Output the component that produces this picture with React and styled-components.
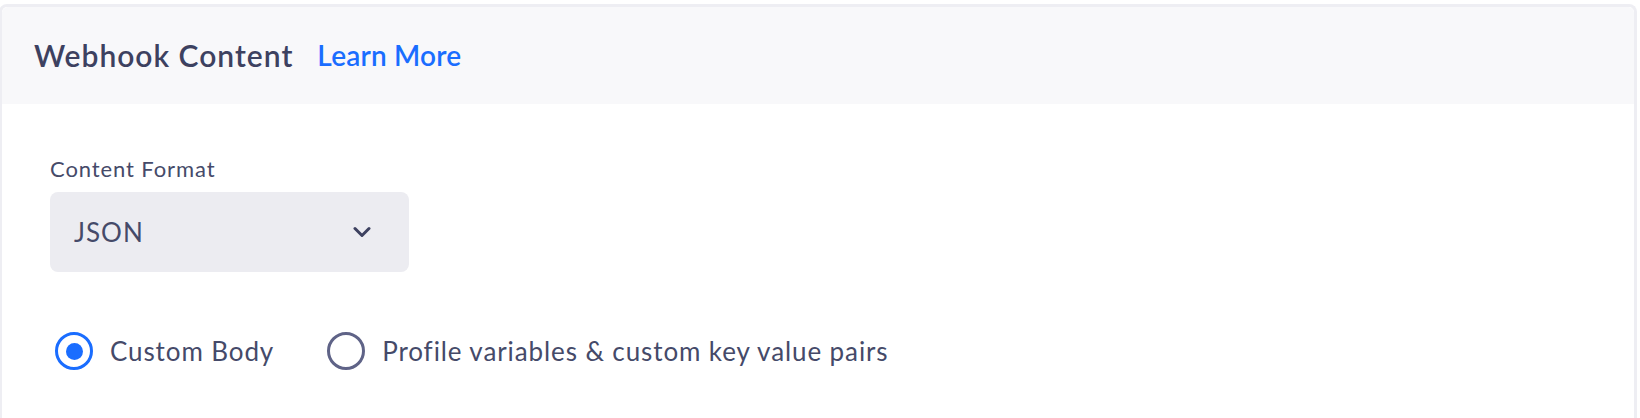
import React, { useState } from "react";
import styled, { createGlobalStyle } from "styled-components";

const GlobalStyle = createGlobalStyle`
  body {
    margin: 0;
    background: #ffffff;
    font-family: "Lato", "Liberation Sans", sans-serif;
  }
`;

const Page = styled.div`
  padding-top: 4px;
  margin-left: -1px;
  width: 1638px;
`;

const Card = styled.section`
  border: 3px solid #eeeef3;
  border-bottom: none;
  border-radius: 8px 8px 0 0;
  background: #ffffff;
  min-height: 420px;
  box-sizing: border-box;
`;

const Header = styled.header`
  display: flex;
  align-items: center;
  gap: 24px;
  height: 97px;
  padding: 0 0 2px 32px;
  box-sizing: border-box;
  background: #f8f8fa;
  border-radius: 6px 6px 0 0;
`;

const Title = styled.h2`
  margin: 0;
  font-size: 30px;
  font-weight: 600;
  color: #3d4160;
  letter-spacing: 1px;
`;

const Link = styled.a`
  font-size: 28px;
  font-weight: 600;
  color: #1a6dff;
  letter-spacing: 0.2px;
  text-decoration: none;
  cursor: pointer;
`;

const Body = styled.div`
  padding: 51px 0 0 48px;
`;

const Label = styled.label`
  display: block;
  font-size: 22px;
  line-height: 28px;
  letter-spacing: 0.9px;
  color: #454a69;
  margin-bottom: 9px;
`;

const Select = styled.button`
  display: flex;
  align-items: center;
  justify-content: space-between;
  width: 359px;
  height: 80px;
  padding: 0 38px 0 24px;
  border: none;
  border-radius: 8px;
  background: #ececf1;
  font-family: inherit;
  font-size: 26px;
  letter-spacing: 1px;
  color: #454a69;
  cursor: pointer;
`;

const RadioGroup = styled.div`
  display: flex;
  align-items: center;
  gap: 53px;
  margin-top: 60px;
  margin-left: 5px;
`;

const RadioOption = styled.label`
  display: flex;
  align-items: center;
  gap: 17px;
  font-size: 26px;
  letter-spacing: 0.9px;
  color: #454a69;
  cursor: pointer;
`;

const RadioCircle = styled.span`
  display: flex;
  align-items: center;
  justify-content: center;
  flex-shrink: 0;
  width: 38px;
  height: 38px;
  box-sizing: border-box;
  border-radius: 50%;
  border: ${(p) => (p.checked ? "3.5px solid #1a6dff" : "3px solid #5f6387")};

  &::after {
    content: "";
    display: ${(p) => (p.checked ? "block" : "none")};
    width: 17px;
    height: 17px;
    border-radius: 50%;
    background: #1a6dff;
  }
`;

const Chevron = () => (
  <svg width="18" height="12" viewBox="0 0 18 12" fill="none">
    <path
      d="M2 2.5L9 9.5L16 2.5"
      stroke="#3d4160"
      strokeWidth="3"
      strokeLinecap="round"
      strokeLinejoin="round"
    />
  </svg>
);

const options = [
  { id: "custom", label: "Custom Body" },
  { id: "profile", label: "Profile variables & custom key value pairs" },
];

export default function App() {
  const [mode, setMode] = useState("custom");

  return (
    <Page>
      <GlobalStyle />
      <Card>
        <Header>
          <Title>Webhook Content</Title>
          <Link>Learn More</Link>
        </Header>
        <Body>
          <Label>Content Format</Label>
          <Select>
            <span>JSON</span>
            <Chevron />
          </Select>
          <RadioGroup>
            {options.map((o) => (
              <RadioOption key={o.id} onClick={() => setMode(o.id)}>
                <RadioCircle checked={mode === o.id} />
                {o.label}
              </RadioOption>
            ))}
          </RadioGroup>
        </Body>
      </Card>
    </Page>
  );
}
